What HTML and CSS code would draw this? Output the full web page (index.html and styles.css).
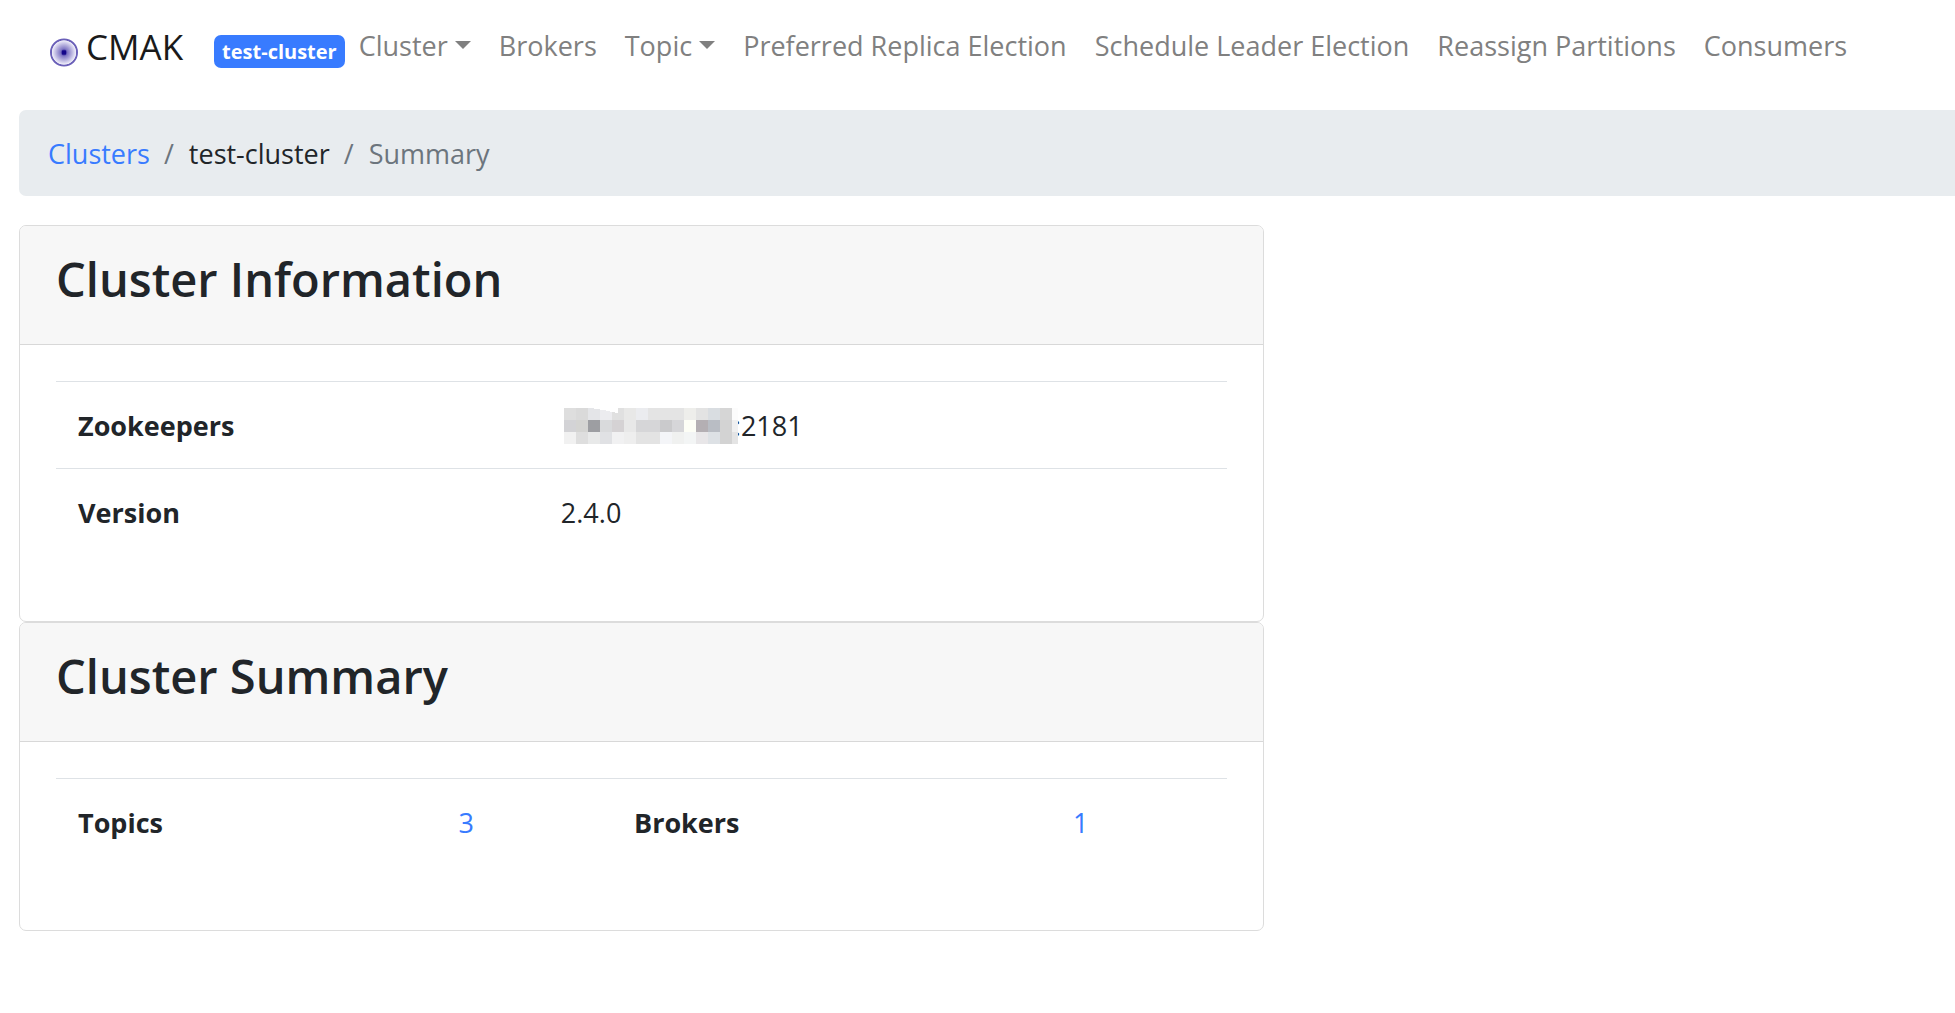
FILE: index.html
```
<!DOCTYPE html>
<html lang="en">
<head>
<meta charset="utf-8">
<title>CMAK</title>
<link rel="stylesheet" href="styles.css">
</head>
<body>
<nav class="navbar">
  <a class="brand" href="#">
    <svg class="brand-icon" viewBox="0 0 28 28" aria-hidden="true">
      <defs>
        <radialGradient id="eye">
          <stop offset="0" stop-color="#1a0c8c"/>
          <stop offset=".16" stop-color="#3a2c9e"/>
          <stop offset=".3" stop-color="#8077c4"/>
          <stop offset=".6" stop-color="#b0aadb"/>
          <stop offset="1" stop-color="#f0effa"/>
        </radialGradient>
      </defs>
      <circle cx="14" cy="14" r="13" fill="#f0effa" stroke="#6a5fb8" stroke-width="2"/>
      <circle cx="14" cy="14" r="12" fill="url(#eye)"/>
      <rect x="12" y="12" width="4" height="4" fill="#14068a"/>
    </svg>
    <span>CMAK</span>
  </a>
  <span class="badge">test-cluster</span>
  <ul class="nav">
    <li><button class="nav-link dropdown" type="button">Cluster</button></li>
    <li><a class="nav-link" href="#">Brokers</a></li>
    <li><button class="nav-link dropdown" type="button">Topic</button></li>
    <li><a class="nav-link" href="#">Preferred Replica Election</a></li>
    <li><a class="nav-link" href="#">Schedule Leader Election</a></li>
    <li><a class="nav-link" href="#">Reassign Partitions</a></li>
    <li><a class="nav-link" href="#">Consumers</a></li>
  </ul>
</nav>
<main class="content">
  <ol class="breadcrumb">
    <li><a href="#">Clusters</a></li>
    <li>test-cluster</li>
    <li class="active">Summary</li>
  </ol>
  <div class="columns">
    <div>
      <section class="card">
        <header class="card-header"><h3>Cluster Information</h3></header>
        <div class="card-body">
          <table class="table info">
            <tbody>
              <tr>
                <th scope="row">Zookeepers</th>
                <td><div class="host"><svg class="mask" viewBox="0 0 174 36" shape-rendering="crispEdges" aria-hidden="true">
                  <path fill="#dedede" d="M0 0h12v12H0z"/><path fill="#dadada" d="M12 0h12v12H12z"/><path fill="#e4e5e8" d="M24 0h12v12H24z"/><path fill="#ececef" d="M36 0h12v12H36z"/><path fill="#e0e0e0" d="M48 0h12v12H48z"/><path fill="#e8e8e7" d="M60 0h12v12H60z"/><path fill="#ebecef" d="M72 0h12v12H72z"/><path fill="#e4e4e4" d="M84 0h36v12H84z"/><path fill="#eeeeeb" d="M120 0h12v12h-12z"/><path fill="#e3e3e3" d="M132 0h12v12h-12z"/><path fill="#d9dde1" d="M144 0h12v12h-12z"/><path fill="#d6d6d6" d="M156 0h12v12h-12z"/><path fill="#fcfcfc" d="M168 0h6v12h-6z"/>
                  <path fill="#d3d3d6" d="M0 12h12v12H0z"/><path fill="#d4d4d2" d="M12 12h12v12H12z"/><path fill="#9d9ea2" d="M24 12h12v12H24z"/><path fill="#d9dadc" d="M36 12h12v12H36z"/><path fill="#d5d2d4" d="M48 12h12v12H48z"/><path fill="#e8e8e8" d="M60 12h12v12H60z"/><path fill="#d6d6d8" d="M72 12h24v12H72z"/><path fill="#cacacc" d="M96 12h12v12H96z"/><path fill="#d6d6d9" d="M108 12h12v12h-12z"/><path fill="#fdfef6" d="M120 12h12v12h-12z"/><path fill="#b4afb3" d="M132 12h12v12h-12z"/><path fill="#b9bdc4" d="M144 12h12v12h-12z"/><path fill="#d3d3d3" d="M156 12h12v24h-12z"/><path fill="#f0f0f0" d="M168 12h6v12h-6z"/>
                  <path fill="#f1f1f1" d="M0 24h12v12H0z"/><path fill="#dedede" d="M12 24h12v12H12z"/><path fill="#e8e9e9" d="M24 24h12v12H24z"/><path fill="#e0e1e4" d="M36 24h12v12H36z"/><path fill="#f1f1f2" d="M48 24h12v12H48z"/><path fill="#eeeeee" d="M60 24h12v12H60z"/><path fill="#e3e3e3" d="M72 24h24v12H72z"/><path fill="#f4f5f8" d="M96 24h12v12H96z"/><path fill="#f0f1f0" d="M108 24h12v12h-12z"/><path fill="#f3f5f5" d="M120 24h12v12h-12z"/><path fill="#e8e6e8" d="M132 24h12v12h-12z"/><path fill="#dde1e5" d="M144 24h12v12h-12z"/><path fill="#e4e4e4" d="M168 24h6v12h-6z"/>
                  <path fill="#fff" d="M28 0h26v5l-6-1-8-2-8-1z"/>
                </svg><span>:2181</span></div></td>
              </tr>
              <tr>
                <th scope="row">Version</th>
                <td>2.4.0</td>
              </tr>
            </tbody>
          </table>
        </div>
      </section>
      <section class="card">
        <header class="card-header"><h3>Cluster Summary</h3></header>
        <div class="card-body">
          <table class="table summary">
            <tbody>
              <tr>
                <th scope="row">Topics</th>
                <td><a href="#">3</a></td>
                <th scope="row">Brokers</th>
                <td><a href="#">1</a></td>
              </tr>
            </tbody>
          </table>
        </div>
      </section>
    </div>
  </div>
</main>
</body>
</html>
```
FILE: styles.css
```
*, *::before, *::after { box-sizing: border-box; }

body {
  margin: 0;
  background: #fff;
  color: #212529;
  font-family: "Segoe UI", "Open Sans", "Noto Sans", sans-serif;
  font-size: 27px;
  line-height: 43px;
}

a { color: #387bff; text-decoration: none; }

.navbar {
  display: flex;
  align-items: center;
  height: 110px;
  padding: 0 50px 18px;
}

.brand {
  display: flex;
  align-items: center;
  gap: 8px;
  margin-right: 31px;
  color: #1a1a1a;
  font-size: 35px;
}

.brand-icon { width: 28px; height: 29px; margin-top: 13px; }

.badge {
  margin: 11px 14px 0 0;
  padding: 0 8px;
  border-radius: 7px;
  background: #387bff;
  color: #fff;
  font-size: 20px;
  font-weight: 700;
  line-height: 33px;
  white-space: nowrap;
}

.nav {
  display: flex;
  gap: 28px;
  margin: 0 0 2px;
  padding: 0;
  list-style: none;
  white-space: nowrap;
}

.nav-link {
  display: block;
  padding: 0;
  border: 0;
  background: none;
  color: #808080;
  font: inherit;
}

.dropdown { display: flex; align-items: center; gap: 7px; }

.dropdown::after {
  content: "";
  border: 8px solid transparent;
  border-top-color: currentColor;
  border-bottom: 0;
}

.content { padding-left: 19px; }

.breadcrumb {
  display: flex;
  margin: 0 0 29px;
  padding: 22px 29px 21px;
  border-radius: 7px 0 0 7px;
  background: #e8ecef;
  list-style: none;
}

.breadcrumb li + li::before {
  content: "/";
  padding: 0 15px 0 14px;
  color: #6c757d;
}

.breadcrumb .active { color: #6c757d; }

.columns { display: grid; grid-template-columns: 9fr 5fr; }

.card { border: 1px solid #dcdcdc; border-radius: 7px; }

.card-header {
  padding: 23px 36px 34px;
  border-bottom: 1px solid #d8d8d8;
  border-radius: 6px 6px 0 0;
  background: #f7f7f7;
}

.card-header h3 {
  margin: 0;
  font-size: 47px;
  font-weight: 600;
  line-height: 61px;
}

.card-body { padding: 36px 36px 65px; }

.table { width: 100%; border-collapse: collapse; table-layout: fixed; }

.table th, .table td {
  height: 87px;
  padding: 1px 22px 0;
  border-top: 1px solid #dee2e6;
  text-align: left;
}

.table th { font-weight: 700; }

.info th { width: 41.25%; }

.summary th:first-child { width: 32.5%; }
.summary td { width: 15%; }

.host { display: flex; align-items: center; padding-left: 3px; }

.mask { z-index: 1; width: 174px; height: 36px; margin-right: -4px; }
```
